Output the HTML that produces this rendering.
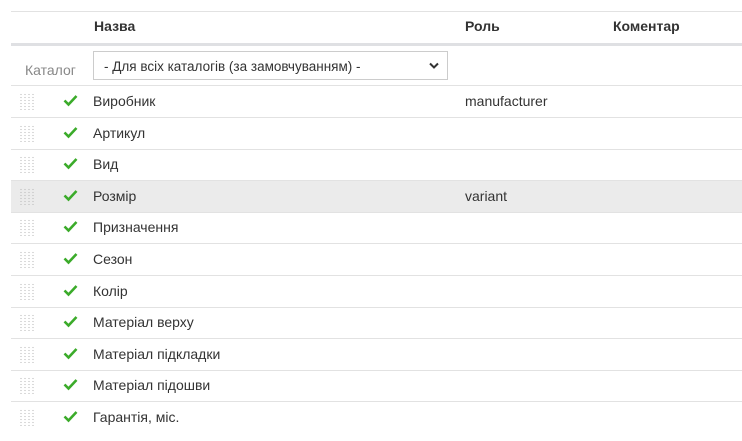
<!DOCTYPE html>
<html><head><meta charset="utf-8"><style>
*{margin:0;padding:0;box-sizing:border-box}
body{width:742px;height:441px;background:#fff;font-family:"Liberation Sans",sans-serif;font-size:14px;color:#333;position:relative;overflow:hidden}
.a{position:absolute}
.hl{position:absolute;left:11px;right:0;height:1px;background:#e2e2e2}
.h{position:absolute;top:18px;font-weight:bold;color:#333}
.row{position:absolute;left:11px;right:0;height:32px}
.grip{position:absolute;left:8px;top:7px;width:15px;height:17px;background-image:radial-gradient(circle,#bbb 0.7px,transparent 0.8px);background-size:4px 3px}
.chk{position:absolute;left:52px;top:8px}
.nm{position:absolute;left:82px;top:7px}
.rl{position:absolute;left:454px;top:7px}
</style></head><body>
<div class="hl" style="top:11px"></div>
<div class="h" style="left:94px">Назва</div>
<div class="h" style="left:465px">Роль</div>
<div class="h" style="left:613px">Коментар</div>
<div class="hl" style="top:43px;height:3px;background:#dfe0e3"></div>
<div class="a" style="left:25px;top:62px;color:#888">Каталог</div>
<div class="a" style="left:93px;top:51px;width:355px;height:29px;border:1px solid #ccc;padding:7px 10px;font-size:13.5px;color:#333">- Для всіх каталогів (за замовчуванням) -
<svg style="position:absolute;right:8px;top:10px" width="10" height="7" viewBox="0 0 10 7"><path d="M1 1.5 L5 5.5 L9 1.5" fill="none" stroke="#333" stroke-width="2"/></svg></div>
<div class="hl" style="top:85px"></div>

<div id="rows"></div>
<script>
var r=[["Виробник","manufacturer"],["Артикул",""],["Вид",""],["Розмір","variant"],["Призначення",""],["Сезон",""],["Колір",""],["Матеріал верху",""],["Матеріал підкладки",""],["Матеріал підошви",""],["Гарантія, міс.",""]];
var h="";
for(var i=0;i<r.length;i++){var t=86+i*31.6;
h+='<div class="row" style="top:'+t+'px;'+(i==3?'background:#ebebeb;':'')+'"><div class="grip"></div><svg class="chk" width="15" height="13" viewBox="0 0 15 13"><path d="M1.5 6.5 L5.5 10.5 L13.5 2" fill="none" stroke="#3bab2a" stroke-width="2.6"/></svg><div class="nm">'+r[i][0]+'</div><div class="rl">'+r[i][1]+'</div></div>';
if(i<r.length-1)h+='<div class="hl" style="top:'+(t+31)+'px"></div>';}
document.getElementById("rows").innerHTML=h;
</script>
</body></html>
